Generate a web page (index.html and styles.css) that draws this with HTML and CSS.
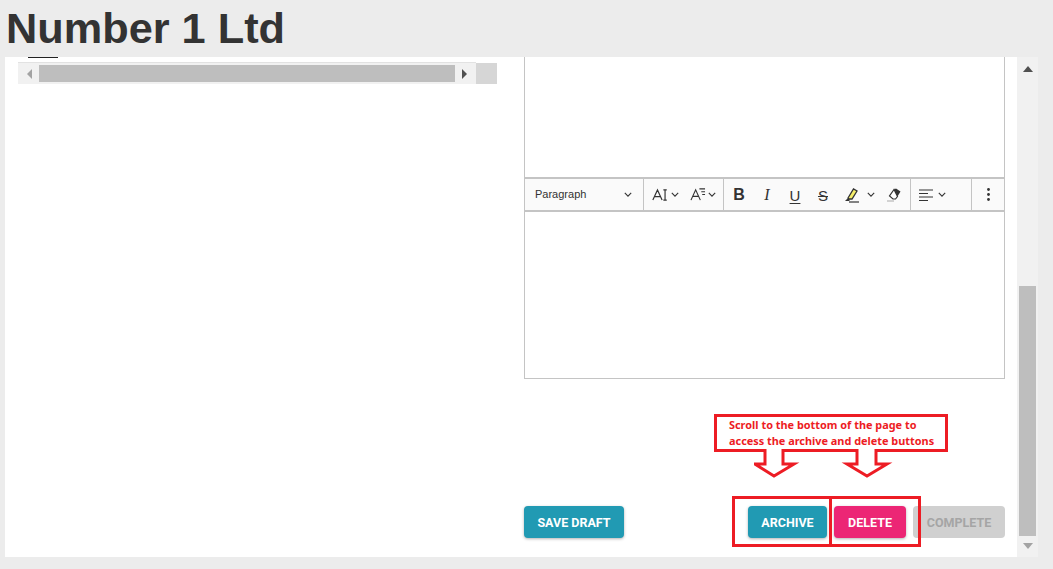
FILE: index.html
```html
<!DOCTYPE html>
<html lang="en">
<head>
<meta charset="utf-8">
<title>Number 1 Ltd</title>
<link rel="stylesheet" href="styles.css">
</head>
<body>
<header class="page-header"><h1 class="title">Number 1 Ltd</h1></header>
<main class="panel">
  <div class="content">
    <section class="left">
      <div class="stub"></div>
      <div class="hscroll">
        <div class="hscroll-track">
          <svg class="harrow" width="6" height="10" viewBox="0 0 6 10"><path d="M6 0v10L1 5z" fill="#a3a3a3"/></svg>
          <div class="hscroll-thumb"></div>
          <svg class="harrow" width="6" height="10" viewBox="0 0 6 10"><path d="M0 0v10l5-5z" fill="#505050"/></svg>
        </div>
        <div class="hscroll-corner"></div>
      </div>
    </section>
    <section class="right">
      <div class="editor-top"></div>
      <div class="toolbar">
        <div class="tb-group tb-para">
          <span class="para-label">Paragraph</span>
          <svg class="chev" width="8" height="5" viewBox="0 0 10 6"><path d="M1 1l4 4 4-4" /></svg>
        </div>
        <div class="tb-group tb-size">
          <svg class="ico" width="16" height="14" viewBox="0 0 19 16"><path d="M1 14L6.500 2 12 14M3 10h7M15.500 2v12M13.500 2h4M13.500 14h4" fill="none" stroke="#333" stroke-width="1.400"/></svg>
          <svg class="chev size-c1" width="8" height="5" viewBox="0 0 10 6"><path d="M1 1l4 4 4-4" /></svg>
          <svg class="ico size-b" width="16" height="15" viewBox="0 0 17 16"><path d="M1 14L6 3l5 11M3 10h6M10 2h6M12 5h4M13 8h3" fill="none" stroke="#333" stroke-width="1.200"/></svg>
          <svg class="chev size-c2" width="8" height="5" viewBox="0 0 10 6"><path d="M1 1l4 4 4-4" /></svg>
        </div>
        <div class="tb-group tb-format">
          <span class="fmt fmt-b">B</span>
          <span class="fmt fmt-i">I</span>
          <span class="fmt fmt-u">U</span>
          <span class="fmt fmt-s">S</span>
          <svg class="ico mark" width="15" height="16" viewBox="0 0 15 16"><path d="M4 11L9.500 2 13 4l-5 8-3 0z" fill="#f5ee6a" stroke="#333" stroke-width="1.300"/><path d="M1 14l3-3 2 2-1 1z" fill="#333"/><path d="M5 15h10" stroke="#333" stroke-width="1.200"/></svg>
          <svg class="chev" width="8" height="5" viewBox="0 0 10 6"><path d="M1 1l4 4 4-4" /></svg>
          <svg class="ico eraser" width="14" height="14" viewBox="0 0 14 14"><path d="M7 1.500l2-1 4.500 3-3 5z" fill="#333"/><path d="M7 1.500L2.500 8 6 11h2.500l2-2.500z" fill="#fff" stroke="#333" stroke-width="1.200"/><path d="M0 13h7" stroke="#aaa"/></svg>
        </div>
        <div class="tb-group tb-align">
          <svg class="ico" width="14" height="12" viewBox="0 0 14 12"><path d="M0 1h14M0 4.500h9M0 8h14M0 11.500h9" stroke="#333" stroke-width="1"/></svg>
          <svg class="chev" width="8" height="5" viewBox="0 0 10 6"><path d="M1 1l4 4 4-4" /></svg>
        </div>
        <div class="tb-group tb-more">
          <svg width="3" height="13" viewBox="0 0 3 13"><circle cx="1.500" cy="1.500" r="1.400" fill="#333"/><circle cx="1.500" cy="6.500" r="1.400" fill="#333"/><circle cx="1.500" cy="11.500" r="1.400" fill="#333"/></svg>
        </div>
      </div>
      <div class="editor-body"></div>
      <div class="actions">
        <button class="btn btn-teal btn-save" type="button">SAVE DRAFT</button>
        <div class="actions-right">
          <button class="btn btn-teal btn-archive" type="button">ARCHIVE</button>
          <button class="btn btn-pink btn-delete" type="button">DELETE</button>
          <button class="btn btn-off btn-complete" type="button">COMPLETE</button>
        </div>
      </div>
    </section>
  </div>
  <aside class="vscroll">
    <svg class="varrow" width="10" height="6" viewBox="0 0 10 6"><path d="M0 6h10L5 0z" fill="#505050"/></svg>
    <div class="vscroll-thumb"></div>
    <svg class="varrow" width="10" height="6" viewBox="0 0 10 6"><path d="M0 0h10L5 6z" fill="#a3a3a3"/></svg>
  </aside>
</main>
<div class="note">
  <p class="note-text">Scroll to the bottom of the page to<br>access the archive and delete buttons</p>
</div>
<svg class="note-arrows" width="145" height="30" viewBox="0 0 145 30"><path d="M11 0v15H1l19 12 20-12H29V0M103 0v15H93l20 12 20-12h-11V0" fill="#fff" stroke="#ed1c24" stroke-width="3"/></svg>
<div class="mark-box mark-archive"></div>
<div class="mark-box mark-delete"></div>
</body>
</html>
```
FILE: styles.css
```css
* { box-sizing: border-box; }
html, body { height: 100%; }
body {
  margin: 0;
  height: 569px;
  overflow: hidden;
  background: #ececec;
  font-family: "Liberation Sans", Arial, sans-serif;
  display: flex;
  flex-direction: column;
  position: relative;
}
.page-header { height: 57px; padding-left: 6px; }
.title {
  margin: 0;
  font-size: 43.300px;
  line-height: 57px;
  font-weight: 700;
  color: #333;
}
.panel {
  width: 1033px;
  height: 500px;
  margin-left: 5px;
  display: flex;
  background: #fff;
}
.content {
  width: 1012px;
  padding-left: 13px;
  display: flex;
  gap: 27px;
}
.left { width: 479px; }
.stub { width: 30px; height: 1px; margin-left: 10px; background: #222; }
.hscroll { display: flex; height: 22px; margin-top: 4px; }
.hscroll-track {
  width: 458px;
  background: #f1f1f1;
  border-top: 1px solid #e2e2e2;
  display: flex;
  align-items: center;
  padding: 0 8px;
  gap: 7px;
}
.hscroll-thumb { flex: 1; height: 17px; background: #bebebe; }
.harrow { flex: none; }
.hscroll-corner { width: 21px; background: #d6d6d6; margin-top: 1px; }
.right { width: 481px; display: flex; flex-direction: column; }
.editor-top {
  height: 120px;
  border-left: 1px solid #c4c4c4;
  border-right: 1px solid #c4c4c4;
}
.toolbar {
  height: 35px;
  display: flex;
  background: #fafafa;
  border: 1px solid #c4c4c4;
  border-top-width: 2px;
  border-bottom-width: 2px;
}
.tb-group {
  display: flex;
  align-items: center;
  border-right: 1px solid #c4c4c4;
}
.tb-para { width: 119px; padding: 0 11px 1px 10px; justify-content: space-between; }
.para-label { font-size: 11px; color: #333; font-family: "Liberation Sans", sans-serif; }
.tb-size { width: 80px; padding-left: 8px; }
.size-c1 { margin-left: 3px; }
.size-b { margin-left: 11px; }
.size-c2 { margin-left: 2px; }
.tb-format { width: 187px; padding-left: 1px; }
.tb-align { width: 61px; padding-left: 8px; gap: 5px; }
.tb-more { flex: 1; justify-content: center; border-right: 0; }
.chev { flex: none; }
.chev path { fill: none; stroke: #333; stroke-width: 1.400; }
.fmt { width: 28px; padding-top: 1px; text-align: center; font-size: 16px; color: #333; font-family: "Liberation Sans", sans-serif; }
.fmt-b { font-weight: 700; }
.fmt-i { font-style: italic; font-family: "Liberation Serif", serif; }
.fmt-u { text-decoration: underline; text-decoration-thickness: 1px; text-underline-offset: 2px; font-size: 15px; }
.fmt-s { text-decoration: line-through; text-decoration-thickness: 1px; font-size: 15px; }
.mark { margin-left: 7px; }
.tb-format .chev { margin-left: 8px; }
.eraser { margin-left: 12px; }
.editor-body {
  height: 167px;
  border: 1px solid #c4c4c4;
  border-top: 0;
}
.actions {
  margin-top: 127px;
  display: flex;
  justify-content: space-between;
}
.actions-right { display: flex; gap: 7px; }
.btn {
  height: 32px;
  padding: 0;
  border: 0;
  border-radius: 4px;
  font-family: Roboto, sans-serif;
  font-size: 12.500px;
  font-weight: 700;
  color: #fff;
  box-shadow: 0 1px 3px rgba(0, 0, 0, 0.3);
}
.btn-save { width: 100px; }
.btn-archive { width: 79px; }
.btn-delete { width: 72px; }
.btn-complete { width: 92px; }
.btn-teal { background: #219ab3; }
.btn-pink { background: #ec2675; }
.btn-off { background: #d0d0d0; color: #a5a5a5; box-shadow: none; }
.vscroll {
  width: 21px;
  background: #f1f1f1;
  display: flex;
  flex-direction: column;
  align-items: center;
  padding-top: 9px;
}
.vscroll-thumb { width: 17px; height: 250px; margin-top: 214px; margin-bottom: 7px; background: #bebebe; }
.varrow { flex: none; }
.note {
  position: absolute;
  left: 714px;
  top: 414px;
  width: 234px;
  height: 38px;
  border: 3px solid #ed1c24;
  background: #fff;
  padding: 0 0 0 12px;
}
.note-text {
  margin: 0;
  font-family: "Noto Sans", sans-serif;
  font-size: 10.900px;
  line-height: 15.500px;
  font-weight: 700;
  color: #ed1c24;
  white-space: nowrap;
}
.note-arrows { position: absolute; left: 754px; top: 449px; }
.mark-box { position: absolute; top: 496px; height: 51px; border: 3px solid #ed1c24; }
.mark-archive { left: 732px; width: 100px; }
.mark-delete { left: 829px; width: 92px; }
```
